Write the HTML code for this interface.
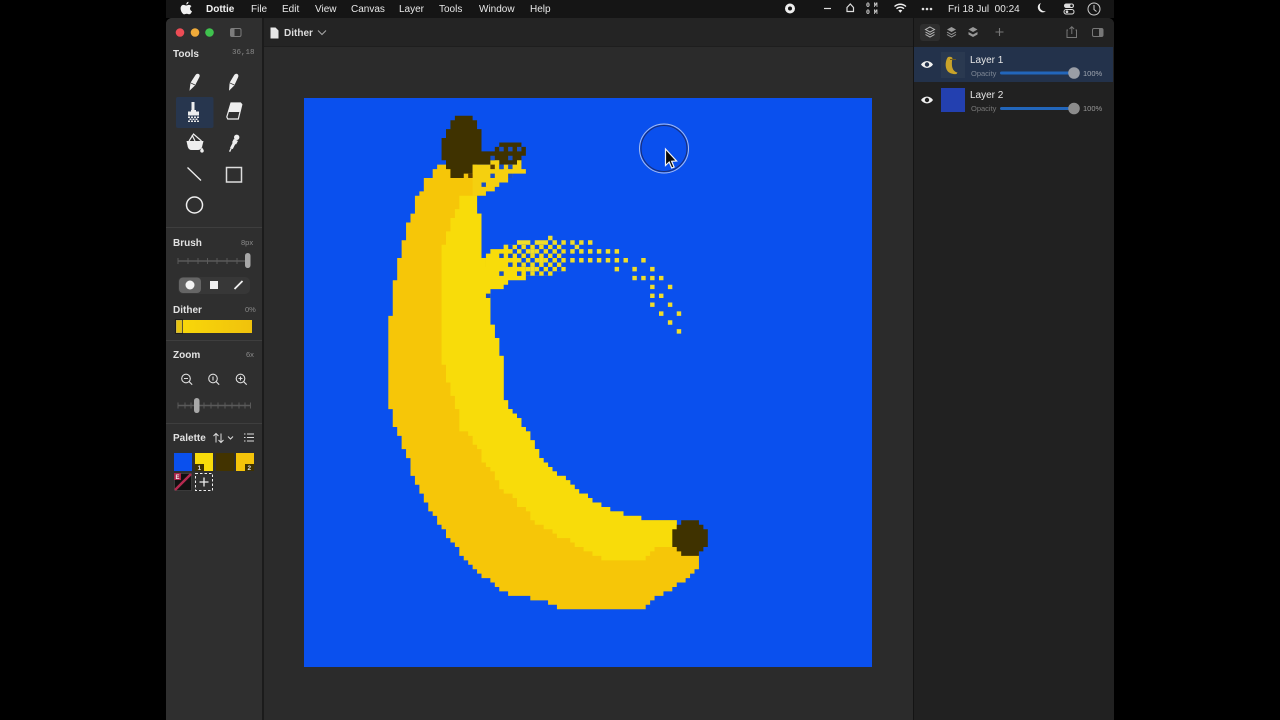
<!DOCTYPE html>
<html><head><meta charset="utf-8"><style>
html,body{margin:0;padding:0;background:#000;width:1280px;height:720px;overflow:hidden}
body{position:relative;font-family:"Liberation Sans",sans-serif;color:#eee}
.a{position:absolute}
.t{position:absolute;white-space:nowrap;line-height:1}
.m{font-size:10px;top:5px;color:#e8e8e8}
.h{font-size:10px;font-weight:bold;color:#e2e2e2;left:173px}
.s{font-size:7.5px;color:#8a8a8a;font-family:"Liberation Mono",monospace}
svg{position:absolute;left:0;top:0;overflow:visible}
</style></head><body>
<div class="a" style="left:166px;top:0;width:948px;height:18px;background:#151515"></div>
<div class="a" style="left:166px;top:18px;width:948px;height:702px;background:#2b2b2b;border-radius:6px 6px 0 0;overflow:hidden">
<div class="a" style="left:0;top:0;width:96px;height:702px;background:#2f2f2f"></div>
<div class="a" style="left:96px;top:0;width:2px;height:702px;background:#1b1b1b"></div>
<div class="a" style="left:98px;top:0;width:650px;height:29px;background:#242424"></div>
<div class="a" style="left:98px;top:28px;width:650px;height:1px;background:#1e1e1e"></div>
<div class="a" style="left:747px;top:0;width:201px;height:702px;background:#212121"></div>
<div class="a" style="left:747px;top:0;width:1px;height:702px;background:#141414"></div>
<div class="a" style="left:748px;top:29px;width:199px;height:35px;background:#23324b"></div>
<div class="a" style="left:0;top:209px;width:96px;height:1px;background:#3e3e3e"></div>
<div class="a" style="left:0;top:322px;width:96px;height:1px;background:#3e3e3e"></div>
<div class="a" style="left:0;top:405px;width:96px;height:1px;background:#3e3e3e"></div>
</div>
<div class="t m" style="left:206px;font-weight:bold;color:#f2f2f2">Dottie</div>
<div class="t m" style="left:251px">File</div>
<div class="t m" style="left:282px">Edit</div>
<div class="t m" style="left:315px">View</div>
<div class="t m" style="left:351px">Canvas</div>
<div class="t m" style="left:399px">Layer</div>
<div class="t m" style="left:439px">Tools</div>
<div class="t m" style="left:479px">Window</div>
<div class="t m" style="left:530px">Help</div>
<div class="t m" style="left:948px">Fri 18 Jul&nbsp; 00:24</div>
<div class="t" style="left:866px;top:2px;font-size:6.5px;font-weight:bold;line-height:7px;font-family:'Liberation Mono',monospace;color:#ddd;white-space:pre">0 M
0 M</div>
<div class="t" style="left:284px;top:29px;font-size:10px;font-weight:bold;color:#ddd">Dither</div>
<div class="t h" style="top:50px">Tools</div>
<div class="t s" style="left:232px;top:50px">36,18</div>
<div class="t h" style="top:239px">Brush</div>
<div class="t s" style="left:241px;top:239px;font-family:'Liberation Sans'">8px</div>
<div class="t h" style="top:306px">Dither</div>
<div class="t s" style="left:245px;top:306px;font-family:'Liberation Sans'">0%</div>
<div class="t h" style="top:351px">Zoom</div>
<div class="t s" style="left:246px;top:351px;font-family:'Liberation Sans'">6x</div>
<div class="t h" style="top:434px">Palette</div>
<div class="t" style="left:970px;top:56px;font-size:10px;color:#e6e6e6">Layer 1</div>
<div class="t" style="left:970px;top:91px;font-size:10px;color:#e6e6e6">Layer 2</div>
<div class="t" style="left:971px;top:70px;font-size:7.5px;color:#7d8694">Opacity</div>
<div class="t" style="left:971px;top:105px;font-size:7.5px;color:#777">Opacity</div>
<div class="t" style="left:1083px;top:70px;font-size:7.5px;color:#a0a6b0">100%</div>
<div class="t" style="left:1083px;top:105px;font-size:7.5px;color:#999">100%</div>

<!-- canvas -->
<svg style="left:304px;top:98px" width="568" height="569" viewBox="0 0 128 128" preserveAspectRatio="none">
<defs><pattern id="c" patternUnits="userSpaceOnUse" width="2" height="2"><rect width="1" height="1" fill="#f2dc1c"/><rect x="1" y="1" width="1" height="1" fill="#f2dc1c"/></pattern></defs>
<rect width="128" height="128" fill="#0a50ee"/>
<path fill="#f6c608" d="M31 14V15H30V16H29V18H27V21H26V22H25V26H24V28H23V32H22V36H21V41H20V49H19V70H20V74H21V76H22V79H23V81H24V85H25V87H26V89H27V91H28V93H29V94H30V96H31V97H32V99H33V100H34V101H35V103H36V104H37V105H38V106H39V107H40V108H42V109H43V110H44V111H46V112H51V113H55V114H57V115H77V114H78V113H79V112H81V111H83V110H84V109H86V108H87V107H88V106H89V97H84V95H76V94H72V93H69V92H67V91H65V90H64V89H62V88H61V87H60V86H59V85H57V84H56V83H55V82H54V81H53V79H52V77H51V75H50V74H49V72H48V71H47V70H46V68H45V58H44V54H43V51H42V38H41V36H40V26H39V15H31Z"/>
<path fill="#f8dc0a" d="M36 22H39V26H40V36H41V38H42V51H43V54H44V58H45V68H46V70H47V71H48V72H49V74H50V75H51V77H52V79H53V81H54V82H55V83H56V84H57V85H59V86H60V87H61V88H62V89H64V90H65V91H67V92H69V93H72V94H76V95H84V101H79V102H78V103H77V104H67V103H65V102H63V101H61V100H60V99H57V98H56V97H54V96H52V95H51V93H50V92H48V90H47V89H45V88H44V86H43V84H42V83H41V82H40V79H39V78H38V76H37V75H35V70H34V67H33V64H32V60H31V33H32V30H33V27H34V25H35V22Z"/>
<path fill="#3f3200" d="M34 4H38V5H39V7H40V12H43V11H44V10H49V11H50V13H49V15H44V14H42V15H38V17H36V18H33V16H32V14H31V9H32V7H33V5H34Z"/>
<path fill="#3f3200" d="M85 95H89V96H90V97H91V101H90V102H89V103H85V102H84V101H83V97H84V96H85Z"/>
<path fill="none" stroke="#f5d00f" stroke-width="1" d="M38 15.5H44M45 15.5h4M38 16.5H50M38 17.5H47M38 18.5H46M38 19.5H44M38 20.5H43M38 21.5H41M42 14.5h2M48 14.5h1"/>
<path fill="none" stroke="#f8dc0a" stroke-width="1" d="M45 33.5h1M42 34.5H47M41 35.5H47M41 36.5H48M41 37.5H49M41 38.5H50M41 39.5H50M41 40.5H50M41 41.5H46M41 42.5H45"/>
<path fill="url(#c)" d="M45 33H58V34H59V35H58V36H59V37H58V38H59V39H56V40H50V38H49V37H48V36H47V34H45Z"/>
<path fill="none" stroke="#f0dc2a" stroke-width="1" d="M55 31.5h1M48 32.5h3M52 32.5h3M56 32.5h1M58 32.5h1M60 32.5h1M62 32.5h1M64 32.5h1M61 33.5h1M60 34.5h1M62 34.5h1M64 34.5h1M66 34.5h1M68 34.5h1M70 34.5h1M60 36.5h1M62 36.5h1M64 36.5h1M66 36.5h1M68 36.5h1M70 36.5h1M72 36.5h1M76 36.5h1M70 38.5h1M74 38.5h1M78 38.5h1M74 40.5h1M76 40.5h1M78 40.5h1M80 40.5h1M78 42.5h1M82 42.5h1M78 44.5h1M80 44.5h1M78 46.5h1M82 46.5h1M80 48.5h1M84 48.5h1M82 50.5h1M84 52.5h1M51 34.5h1M53 36.5h1M51 38.5h1"/>
<path fill="none" stroke="#174fc8" stroke-width="1" d="M44 11.5h1M46 11.5h1M48 11.5h1M42 13.5h1M46 13.5h1M44 15.5h1M46 15.5h1M42 17.5h1M46 17.5h1M40 19.5h1M44 35.5h1M46 35.5h1M46 37.5h1M48 37.5h1M44 39.5h1M48 39.5h1M41 44.5h1"/>
<path fill="none" stroke="#5a3d00" stroke-width="1" d="M42 15.5h1M37 17.5h1"/>
</svg>

<svg width="1280" height="720" viewBox="0 0 1280 720">
<defs><linearGradient id="dg" x1="0" x2="1" y1="0" y2="0"><stop offset="0" stop-color="#f9d90a"/><stop offset="1" stop-color="#f0c20c"/></linearGradient></defs>
<!-- apple -->
<path fill="#f0f0f0" d="M183.300 4.900c.9-.1 1.700.6 2.900.6s1.800-.6 2.700-.6c1 0 1.900.5 2.500 1.300-2.100 1.300-1.700 4.100.6 5-.6 1.500-1.500 3-2.600 3.100-.9.100-1.500-.6-2.600-.6s-1.700.6-2.600.6c-1.500 0-3.700-3.200-3.600-6.100.1-2 1.400-3.300 2.700-3.300zM186.300 4.500c-.1-1.300 1-2.600 2.200-2.700.1 1.500-1.100 2.700-2.200 2.700z"/>
<!-- traffic -->
<circle cx="180" cy="32.500" r="4.300" fill="#ec4c55"/><circle cx="195" cy="32.500" r="4.300" fill="#f0ab3a"/><circle cx="209.500" cy="32.500" r="4.300" fill="#3fc24e"/>
<rect x="230.500" y="28.500" width="10.500" height="8" rx="1.500" fill="none" stroke="#7c7c7c"/><rect x="231" y="29" width="3.500" height="7" fill="#7c7c7c"/>
<!-- doc icon -->
<path fill="#e8e8e8" d="M270.500 27.500h5l3 3v8h-8z"/>
<path fill="none" stroke="#aaa" stroke-width="1" d="M318 30.500l4 4 4-4"/>
<!-- tools -->
<path fill="#eee" d="M189.500 90.700l1-8 5-7.700c1-1.400 2.600-1.600 3.600-.7.800.7.800 1.900.2 3l-4.300 8.200z"/>
<path stroke="#2f2f2f" stroke-width=".8" d="M190.500 82.800l4.500 2.200"/>
<path fill="#eee" d="M229 90.700l.6-8 4.600-7.700c.9-1.400 2.500-1.700 3.500-.8.800.7.900 1.900.4 3l-3.800 8.300z"/>
<path stroke="#2f2f2f" stroke-width=".8" d="M229.600 82.800l4.700 2.200"/>
<g fill="none" stroke="#eee" stroke-width="1">
<path stroke-width="1.300" d="M187.500 167.500l13.500 13"/>
<rect x="226.500" y="167.500" width="15" height="14.500" stroke="#ddd" stroke-width="1.500"/>
<circle cx="194.500" cy="205" r="8" stroke-width="1.500"/>
</g>
<rect x="176" y="97" width="37.500" height="31" rx="2" fill="#27364e"/>
<path fill="#eee" d="M191.500 102h3v8h1.500v1.500h3v4h-11v-4h3v-1.500h.5z"/>
<g fill="#e8e8e8"><rect x="188" y="116.500" width="2" height="1.500"/><rect x="191" y="116.500" width="2" height="1.500"/><rect x="194" y="116.500" width="2" height="1.500"/><rect x="197" y="116.500" width="2" height="1.500"/><rect x="189.500" y="118.500" width="2" height="1.500"/><rect x="192.500" y="118.500" width="2" height="1.500"/><rect x="195.500" y="118.500" width="2" height="1.500"/><rect x="188" y="120.500" width="2" height="1.500"/><rect x="191" y="120.500" width="2" height="1.500"/><rect x="194" y="120.500" width="2" height="1.500"/><rect x="197" y="120.500" width="2" height="1.500"/></g>
<path fill="#2f2f2f" stroke="#eee" stroke-width="1.200" d="M231 103h9.500l1.300 1.500-3.500 14.500h-10.500l-1-2z"/><path fill="#eee" d="M231 103h9.500l1.300 1.500-2.300 7.500h-11.500z"/>
<path fill="#eee" d="M186.500 141h17l-1.500 6c-.8 2-2.500 3-4 3h-6.500c-1.700 0-3-1-3.700-3z"/>
<path fill="none" stroke="#eee" stroke-width="1.200" d="M189 141l4.500-7 8 7M192 135l3 6"/>
<path fill="#eee" d="M202 147.500c1 1.500 1.800 2.300 1.800 3.300a1.800 1.800 0 0 1-3.600 0c0-1 .8-1.800 1.800-3.300z"/>
<circle cx="236.700" cy="137.300" r="2.700" fill="#eee"/>
<path stroke="#eee" stroke-width="4" d="M233 140.500l4 2.200"/>
<path stroke="#eee" stroke-width="3" d="M234.700 142l-3.300 6.500"/>
<path stroke="#eee" stroke-width="1.400" d="M231.300 148l-1.700 3.700"/>
<!-- brush slider -->
<path stroke="#5a5a5a" stroke-width="1.500" d="M178 261h70"/>
<path stroke="#5a5a5a" stroke-width="1" d="M178 258v6M188 258v6M198 258v6M207.500 258v6M217 258v6M227 258v6M237 258v6"/>
<rect x="245" y="253" width="5.500" height="15" rx="2.700" fill="#a8a8a8"/>
<rect x="178" y="277" width="72" height="17" rx="5" fill="#373737"/>
<rect x="179" y="277.500" width="22" height="15.500" rx="4" fill="#656565"/>
<circle cx="190" cy="285" r="4.500" fill="#f4f4f4"/>
<rect x="210" y="281" width="8" height="8" fill="#f0f0f0"/>
<path stroke="#f0f0f0" stroke-width="1.800" d="M234.500 289l8-8"/>
<!-- dither -->
<rect x="175" y="320" width="77" height="13" fill="url(#dg)"/>
<rect x="175.500" y="319.500" width="7" height="14" fill="#e6c410" stroke="#1e1e1e" stroke-width="1"/>
<rect x="176.500" y="320.500" width="5.500" height="12" fill="none" stroke="#c8b450" stroke-width=".7"/>
<!-- zoom icons -->
<g fill="none" stroke="#ddd" stroke-width="1.100">
<circle cx="186" cy="378.500" r="4.300"/><path d="M189.200 381.700l3 3M184 378.500h4"/>
<circle cx="213" cy="378.500" r="4.300"/><path d="M216.200 381.700l3 3M213 376.500v4"/>
<circle cx="240.500" cy="378.500" r="4.300"/><path d="M243.700 381.700l3 3M238.500 378.500h4M240.500 376.500v4"/>
</g>
<path stroke="#5a5a5a" stroke-width="1.500" d="M178 405.500h73"/>
<path stroke="#5a5a5a" stroke-width="1" d="M178 402.500v6M185 402.500v6M191 402.500v6M204 402.500v6M211 402.500v6M218 402.500v6M225 402.500v6M232 402.500v6M239 402.500v6M245 402.500v6M250.500 402.500v6"/>
<rect x="194" y="398" width="5.500" height="15" rx="2.700" fill="#a8a8a8"/>
<!-- palette header -->
<g fill="none" stroke="#ddd" stroke-width="1"><path d="M216 442.500v-9M213.500 436l2.500-2.500 2.500 2.500M221 433.500v9M218.500 440l2.500 2.500 2.500-2.500M228 436.500l2.500 2.500 2.500-2.500"/><path d="M247 434h7M247 437.500h7M247 441h7"/></g>
<g fill="#ddd"><rect x="244" y="433.500" width="1.500" height="1"/><rect x="244" y="437" width="1.500" height="1"/><rect x="244" y="440.500" width="1.500" height="1"/></g>
<!-- swatches -->
<rect x="174" y="453" width="18" height="18" fill="#0a50ee"/>
<rect x="195" y="453" width="18" height="18" fill="#f8dc0a"/><rect x="195" y="464" width="9" height="7" fill="#3f3200"/>
<text x="197.500" y="470" font-size="6.500" font-weight="bold" fill="#ddd" font-family="Liberation Sans">1</text>
<rect x="216" y="453" width="18" height="18" fill="#423300"/>
<rect x="236" y="453" width="18" height="18" fill="#f5c40a"/><rect x="245" y="464" width="9" height="7" fill="#3f3200"/>
<text x="247.500" y="470" font-size="6.500" font-weight="bold" fill="#ddd" font-family="Liberation Sans">2</text>
<rect x="174.500" y="473.500" width="17" height="17" fill="#111" stroke="#555" stroke-width=".5"/>
<path stroke="#b52a50" stroke-width="2.500" d="M175 490l16-16"/>
<rect x="174" y="473" width="7" height="7" fill="#a82248"/>
<text x="175.500" y="479" font-size="6" font-weight="bold" fill="#eee" font-family="Liberation Sans">E</text>
<rect x="195.500" y="473.500" width="17" height="17" fill="none" stroke="#eee" stroke-dasharray="2.500 2"/>
<path stroke="#eee" stroke-width="1.300" d="M204 477.500v9M199.500 482h9"/>
<!-- right menu icons -->
<circle cx="790" cy="8.500" r="5" fill="#eee"/><circle cx="790" cy="8.500" r="2" fill="#151515"/>
<path stroke="#ddd" stroke-width="1.200" d="M824 8.500h7"/>
<path fill="none" stroke="#ddd" stroke-width="1.200" d="M847 11.500h6.500v-4l-3.200-3.500-3.300 3.500z"/>
<path fill="none" stroke="#eee" stroke-width="1.400" d="M894.500 6.500c3.500-3 8-3 11.500 0M896.500 8.700c2.200-2 5.300-2 7.500 0"/>
<path fill="#eee" d="M898.300 10.500c1.200-1 2.800-1 4 0l-2 2.200z"/>
<g fill="#ddd"><circle cx="923" cy="9" r="1.300"/><circle cx="927" cy="9" r="1.300"/><circle cx="931" cy="9" r="1.300"/></g>
<path fill="#eee" d="M1041 3c-3 1-4 4-2.500 6.700s5 3.500 7.300 1.500c-3 .3-6-1.500-6-4.500 0-1.500.5-2.700 1.200-3.700z"/>
<rect x="1064" y="3.500" width="10" height="4.500" rx="2.200" fill="#ddd"/><rect x="1064" y="9.500" width="10" height="4.500" rx="2.200" fill="none" stroke="#ddd"/><circle cx="1071.500" cy="5.700" r="1.300" fill="#151515"/><circle cx="1067" cy="11.700" r="1.300" fill="#ddd"/>
<circle cx="1094" cy="9" r="6" fill="none" stroke="#ccc" stroke-width="1"/><path fill="none" stroke="#ccc" d="M1094 5v4.500l2.500 2"/>
<!-- right toolbar -->
<rect x="920" y="24" width="20" height="17" rx="3" fill="#2e2e2e"/>
<g fill="none" stroke="#bbb" stroke-width="1"><path d="M930 27l4.500 2.500-4.500 2.500-4.500-2.500zM925.500 32l4.500 2.500 4.500-2.500M925.500 34.500l4.500 2.500 4.500-2.500"/></g>
<path fill="#999" d="M951.500 27l4.500 2.500-4.500 2.500-4.500-2.500z"/><path fill="none" stroke="#999" d="M947 32l4.500 2.500 4.500-2.500M947 34.500l4.500 2.500 4.500-2.500"/>
<path fill="#999" d="M973 27l4.500 2.500-4.500 2.500-4.500-2.500zM968.500 32l4.500 2.500 4.500-2.500v2.500l-4.500 2.500-4.500-2.500z"/>
<path stroke="#777" stroke-width="1.100" d="M999.500 28v8M995.500 32h8"/>
<path fill="none" stroke="#777" d="M1068 30h-1v7.500h9.500V30h-1M1071.800 34v-7M1069.500 29l2.300-2.300 2.300 2.300"/>
<rect x="1092.500" y="28.500" width="10.500" height="8" rx="1.500" fill="none" stroke="#777"/><rect x="1099" y="29" width="3.500" height="7" fill="#777"/>
<!-- layers -->
<rect x="941" y="52" width="24" height="26" fill="#2a3950"/>
<path fill="#c9a32a" d="M948 57c-2.500 3-3.500 10-.5 14 2 2.500 6 3.500 9 3l1-1.500c-3-.5-5-3-5.500-6.500-.3-3 0-6 .5-8-1-1.500-3-1.500-4.500-1z"/>
<path stroke="#6d5a20" stroke-width="1" d="M950 59.500h6"/>
<rect x="941" y="88" width="24" height="24" fill="#2340b0"/>
<g><path fill="#f0f0f0" d="M921 64.500c3-4.500 9-4.500 12 0-3 4.500-9 4.500-12 0z"/><circle cx="927" cy="64.500" r="2.200" fill="#23324b"/>
<path fill="#f0f0f0" d="M921 100c3-4.500 9-4.500 12 0-3 4.500-9 4.500-12 0z"/><circle cx="927" cy="100" r="2.200" fill="#212121"/></g>
<rect x="1000" y="71.500" width="74" height="3" rx="1.500" fill="#2266bb"/>
<rect x="1000" y="107" width="74" height="3" rx="1.500" fill="#2266bb"/>
<circle cx="1074" cy="73" r="5.800" fill="#9a9ea6"/><circle cx="1074" cy="108.500" r="5.800" fill="#8c8c8c"/>
<!-- cursor -->
<circle cx="664" cy="148.500" r="24.500" fill="none" stroke="#a8bdf0" stroke-width="1"/>
<circle cx="664" cy="148.500" r="23" fill="none" stroke="#1b2d70" stroke-width="1"/>
<path fill="#0a0a0a" stroke="#f4f4f4" stroke-width="1.200" d="M665.500 149v16.500l3.700-3.500 2.500 6 2.400-1-2.500-5.700 5-.3z"/>
</svg>
</body></html>
